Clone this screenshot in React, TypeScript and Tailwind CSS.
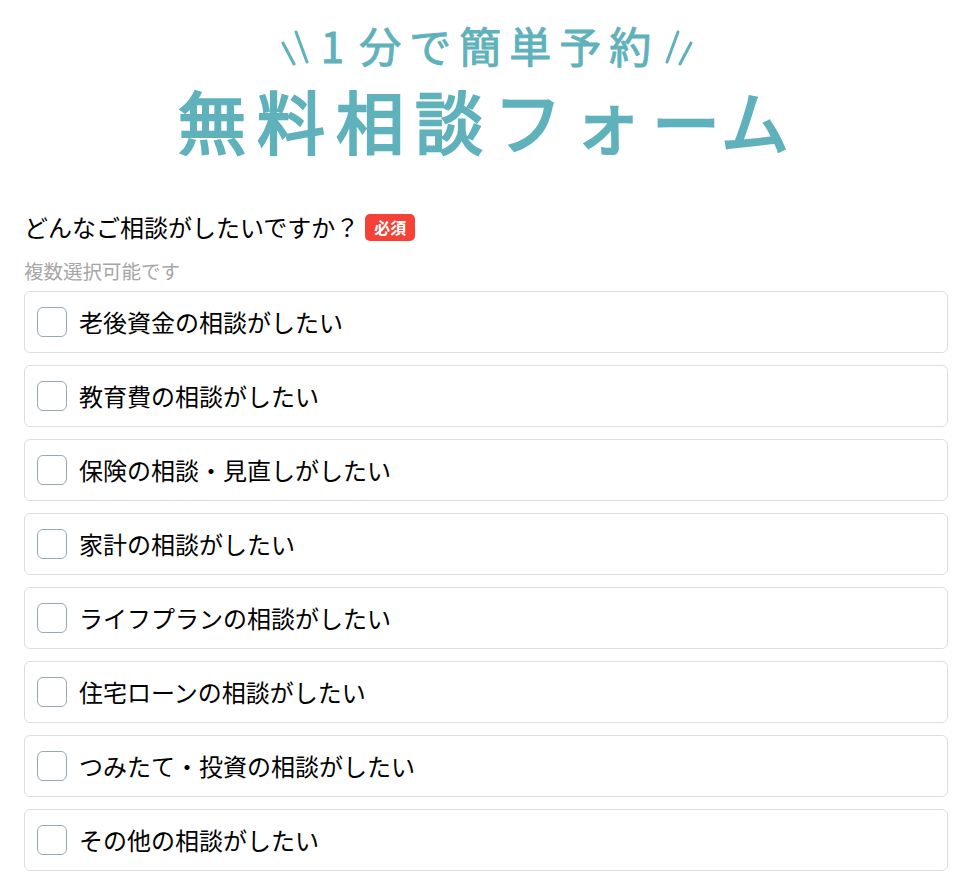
import React from "react";

const options = [
  "老後資金の相談がしたい",
  "教育費の相談がしたい",
  "保険の相談・見直しがしたい",
  "家計の相談がしたい",
  "ライフプランの相談がしたい",
  "住宅ローンの相談がしたい",
  "つみたて・投資の相談がしたい",
  "その他の相談がしたい",
];

function Slashes({ flip }: { flip?: boolean }) {
  return (
    <svg
      width="28"
      height="38"
      viewBox="0 0 28 38"
      className={flip ? "-scale-x-100" : ""}
      fill="none"
      stroke="#5fb2bb"
      strokeWidth="3"
      strokeLinecap="round"
    >
      <path d="M2 15 L13 36" />
      <path d="M15 4 L26 34" />
    </svg>
  );
}

export default function App() {
  return (
    <div className="min-h-screen bg-white font-['Noto_Sans_CJK_JP',sans-serif] text-black overflow-hidden">
      <div className="h-[214px] flex flex-col items-center pt-[21px]">
        <div className="flex items-center h-[52px] ml-[8px] text-[#5fb2bb] text-[42px] leading-none [-webkit-text-stroke:1px_#5fb2bb]">
          <Slashes />
          <span className="ml-[12px] mb-[4px] tracking-[8px] [word-spacing:-10px] whitespace-nowrap">1 分で簡単予約</span>
          <span className="ml-[6px]">
            <Slashes flip />
          </span>
        </div>
        <h1 className="mt-[5px] ml-[12px] text-[#5fb2bb] text-[68px] leading-[84px] tracking-[11px] whitespace-nowrap [-webkit-text-stroke:2.5px_#5fb2bb]">
          無料相談フォ<span className="tracking-[1px]">ー</span>ム
        </h1>
      </div>

      <div className="px-[24px] pr-[18px]">
        <div className="flex items-center h-[30px] mt-[-2px]">
          <span className="text-[24px] leading-none">どんなご相談がしたいですか？</span>
          <span className="ml-[6px] w-[50px] h-[27px] flex items-center justify-center rounded-[5px] bg-[#f44336] text-white font-bold text-[16px] leading-none">
            必須
          </span>
        </div>
        <p className="mt-[16px] h-[28px] text-[19.5px] leading-[26px] text-[#a6a6a6]">複数選択可能です</p>
        <div className="mt-[5px] flex flex-col gap-[12px]">
          {options.map((label) => (
            <label
              key={label}
              className="flex items-center h-[62px] pl-[12px] rounded-[6px] border border-[#dddddd] bg-white"
            >
              <span className="w-[30px] h-[30px] rounded-[6px] border border-[#98a9b4] bg-white shrink-0" />
              <span className="ml-[12px] text-[24px] leading-none">{label}</span>
            </label>
          ))}
        </div>
      </div>
    </div>
  );
}
